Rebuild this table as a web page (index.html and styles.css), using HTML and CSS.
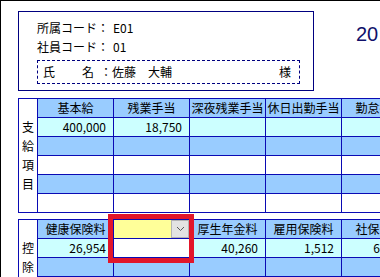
FILE: index.html
```html
<!DOCTYPE html>
<html lang="ja">
<head>
<meta charset="utf-8">
<title>給与明細入力</title>
<link rel="stylesheet" href="styles.css">
</head>
<body>
<div class="screen">
  <div class="top">
    <section class="info">
      <div class="line"><span class="lbl">所属コード：</span><span class="val">E01</span></div>
      <div class="line"><span class="lbl">社員コード：</span><span class="val">01</span></div>
      <div class="name">
        <span class="n1">氏</span><span class="n2">名</span><span class="colon">：</span><span class="nm">佐藤　大輔</span><span class="sama">様</span>
      </div>
    </section>
    <div class="year">20</div>
  </div>

  <table class="grid pay">
    <tr>
      <td class="side" rowspan="6">支<br>給<br>項<br>目</td>
      <td class="hd">基本給</td>
      <td class="hd">残業手当</td>
      <td class="hd">深夜残業手当</td>
      <td class="hd">休日出勤手当</td>
      <td class="hd">勤怠控除</td>
      <td class="hd"></td>
    </tr>
    <tr class="calc">
      <td class="num">400,000</td><td class="num">18,750</td><td></td><td></td><td></td><td></td>
    </tr>
    <tr class="blue"><td></td><td></td><td></td><td></td><td></td><td></td></tr>
    <tr class="white"><td></td><td></td><td></td><td></td><td></td><td></td></tr>
    <tr class="blue"><td></td><td></td><td></td><td></td><td></td><td></td></tr>
    <tr class="white"><td></td><td></td><td></td><td></td><td></td><td></td></tr>
  </table>

  <div class="deduct">
    <table class="grid">
      <tr>
        <td class="side" rowspan="4">控<br>除</td>
        <td class="hd">健康保険料</td>
        <td class="hd pick">
          <div class="select"><span class="field"></span><span class="btn"><svg width="9" height="6" viewBox="0 0 9 6"><path d="M1 1l3.5 3.5L8 1" fill="none" stroke="#5a5a5a" stroke-width="1"/></svg></span></div>
        </td>
        <td class="hd">厚生年金料</td>
        <td class="hd">雇用保険料</td>
        <td class="hd">社保合計</td>
        <td class="hd"></td>
      </tr>
      <tr class="calc">
        <td class="num">26,954</td><td class="plain"></td><td class="num">40,260</td><td class="num">1,512</td><td class="num">68,726</td><td></td>
      </tr>
      <tr class="blue"><td></td><td></td><td></td><td></td><td></td><td></td></tr>
      <tr class="white"><td></td><td></td><td></td><td></td><td></td><td></td></tr>
    </table>
    <div class="highlight"></div>
  </div>
</div>
</body>
</html>
```

FILE: styles.css
```css
html, body {
  margin: 0;
  padding: 0;
  background: #fff;
}

.screen {
  box-sizing: border-box;
  width: 380px;
  height: 277px;
  overflow: hidden;
  border-top: 1px solid #000;
  border-left: 1px solid #000;
  padding: 10px 0 0 17px;
  font-family: "Noto Sans CJK JP", sans-serif;
  font-size: 12px;
  color: #000;
}

/* header block: employee details and period title */
.top {
  display: flex;
  align-items: flex-start;
}

.info {
  box-sizing: border-box;
  flex: none;
  width: 296px;
  height: 80px;
  border: 1px solid #000080;
  padding: 6px 0 0 18px;
}

.line {
  display: flex;
  height: 19px;
  line-height: 19px;
}

.line .val {
  margin-left: 4px;
}

.name {
  box-sizing: border-box;
  display: flex;
  width: 263px;
  height: 24px;
  margin-top: 4px;
  border: 1px dashed #000080;
  line-height: 22px;
  padding: 0 8px 0 5px;
}

.name .n2 {
  margin-left: 27px;
}

.name .colon {
  margin-left: 6px;
}

.name .sama {
  margin-left: auto;
}

.year {
  flex: none;
  margin: 13px 0 0 42px;
  font-family: "Liberation Sans", sans-serif;
  font-size: 20px;
  line-height: 20px;
  color: #10106a;
}

/* entry grids */
.grid {
  table-layout: fixed;
  border-collapse: separate;
  border-spacing: 1px;
  background: #0a0ab4;
  width: 476px;
  flex: none;
}

.grid td {
  width: 75px;
  height: 18px;
  padding: 0 7px;
  line-height: 18px;
  white-space: nowrap;
  overflow: hidden;
  box-sizing: border-box;
  background: #fff;
}

.grid td.side {
  width: 18px;
  padding: 18px 0 0;
  vertical-align: top;
  text-align: center;
  line-height: 19px;
  background: #fff;
}

.grid td.hd {
  background: #99ccff;
  text-align: center;
  padding: 0;
}

.grid .calc td {
  background: #ccffff;
}

.grid .blue td {
  background: #99ccff;
}

.grid .white td {
  background: #fff;
}

.grid td.num {
  text-align: right;
}

.grid .calc td.plain {
  background: #fff;
}

.pay {
  margin-top: 7px;
}

.deduct {
  position: relative;
  margin-top: 6px;
  width: 476px;
}

/* combo box in the second deduction header */
.grid td.pick {
  background: #ffff99;
}

.select {
  display: flex;
  height: 18px;
}

.select .field {
  flex: 1;
}

.select .btn {
  box-sizing: border-box;
  width: 18px;
  height: 18px;
  background: #e3e3e3;
  border: 1px solid #b4b4b4;
  display: flex;
  align-items: center;
  justify-content: center;
}

/* red marker around the combo box */
.highlight {
  position: absolute;
  left: 90px;
  top: -5px;
  width: 86px;
  height: 49px;
  box-sizing: border-box;
  border: 5px solid #e2162a;
}
```
